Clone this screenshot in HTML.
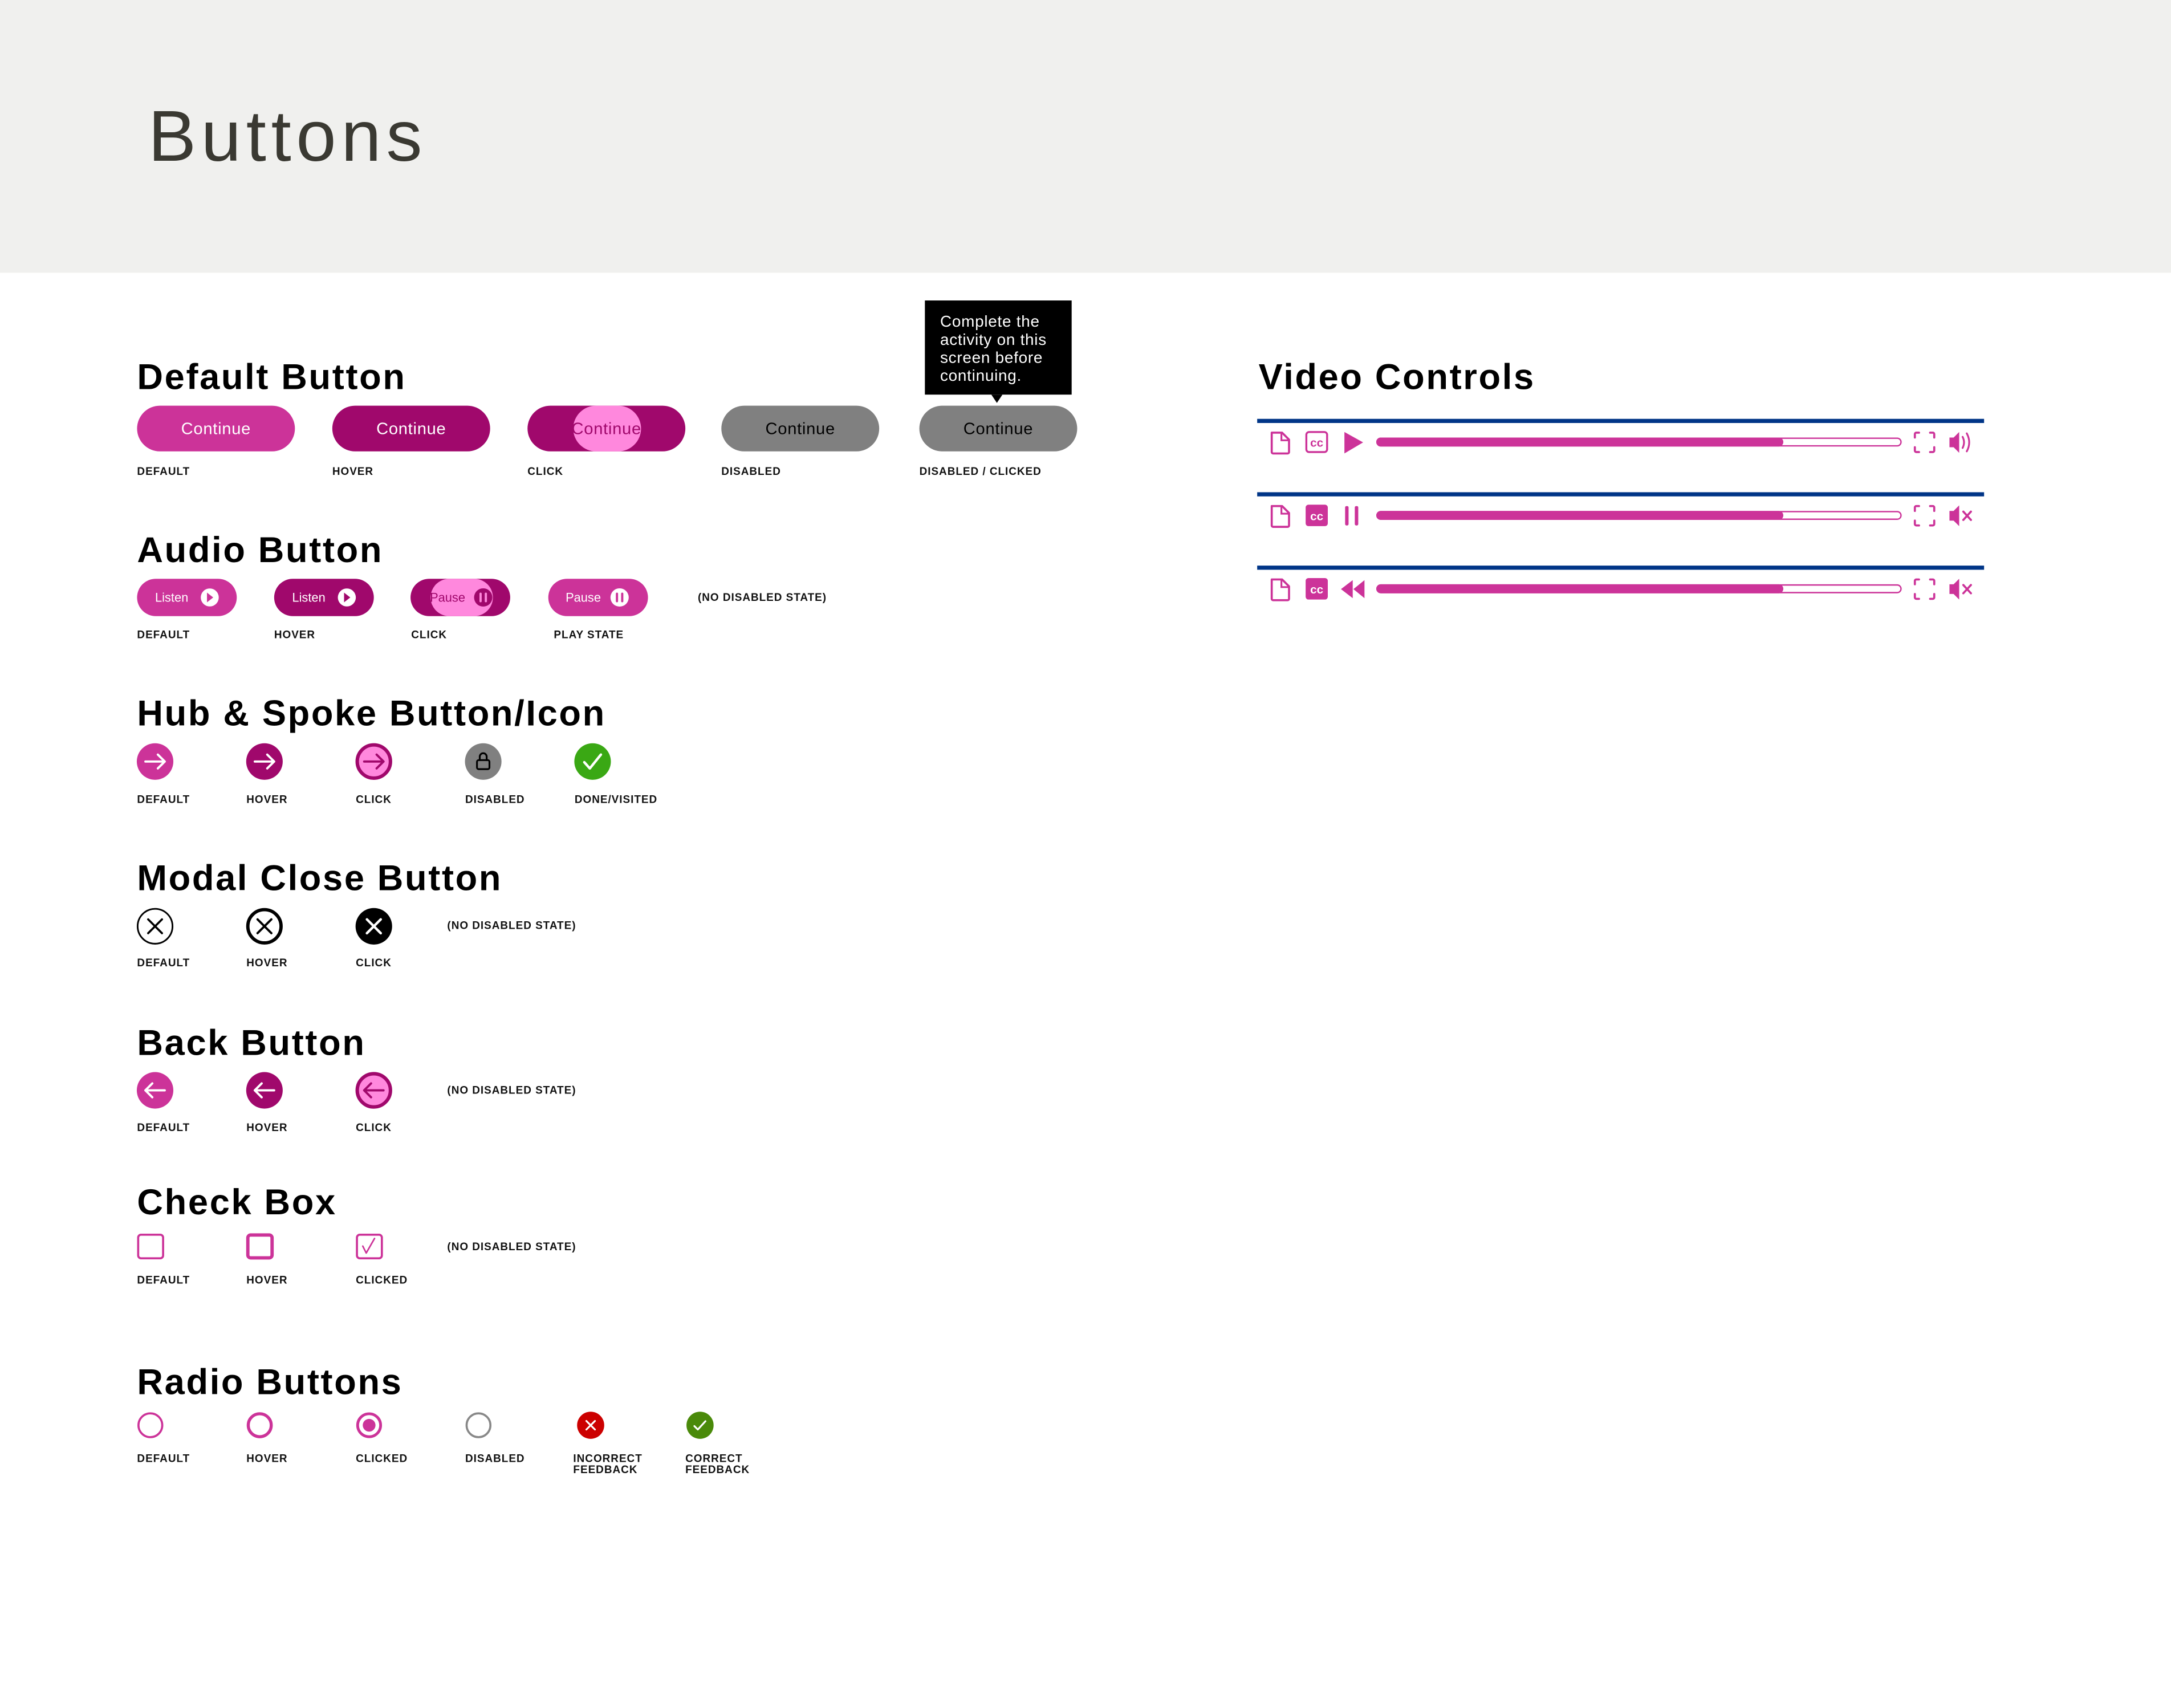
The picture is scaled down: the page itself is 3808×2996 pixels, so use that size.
<!DOCTYPE html>
<html><head><meta charset="utf-8"><style>
html,body{margin:0;padding:0;background:#fff;}
svg{display:block;}
text{font-family:"Liberation Sans",sans-serif;}
.h{font-size:26px;font-weight:bold;fill:#000;letter-spacing:1.1px;}
.l{font-size:7.8px;font-weight:bold;fill:#111;letter-spacing:0.4px;}
.bt{font-size:12px;text-anchor:middle;letter-spacing:0.3px;}
</style></head><body>
<svg width="3808" height="2996" viewBox="0 0 1568 1233.6" xmlns="http://www.w3.org/2000/svg">
<rect x="0" y="0" width="1568" height="1233.6" fill="#fff"/>
<rect x="0" y="0" width="1568" height="197" fill="#f0f0ee"/>
<text x="107" y="116" font-size="52" fill="#3a3932" style="font-weight:normal;letter-spacing:3.6px">Buttons</text>

<!-- Default Button -->
<text class="h" x="99" y="281">Default Button</text>
<rect x="99" y="293" width="114" height="33" rx="16.5" fill="#cc3399"/>
<text class="bt" x="156" y="313.5" fill="#fff">Continue</text>
<rect x="240" y="293" width="114" height="33" rx="16.5" fill="#a0086c"/>
<text class="bt" x="297" y="313.5" fill="#fff">Continue</text>
<rect x="381" y="293" width="114" height="33" rx="16.5" fill="#a0086c"/>
<rect x="414" y="293" width="49" height="33" rx="16.5" fill="#ff88dd"/>
<text class="bt" x="438" y="313.5" fill="#a0086c">Continue</text>
<rect x="521" y="293" width="114" height="33" rx="16.5" fill="#808080"/>
<text class="bt" x="578" y="313.5" fill="#000">Continue</text>
<rect x="664" y="293" width="114" height="33" rx="16.5" fill="#808080"/>
<text class="bt" x="721" y="313.5" fill="#000">Continue</text>
<rect x="668" y="217" width="106" height="68" fill="#000"/>
<polygon points="716,285 724,285 720,291" fill="#000"/>
<g font-size="11.5" fill="#fff" style="letter-spacing:0.3px">
<text x="679" y="236">Complete the</text>
<text x="679" y="249">activity on this</text>
<text x="679" y="262">screen before</text>
<text x="679" y="275">continuing.</text>
</g>
<text class="l" x="99" y="343">DEFAULT</text>
<text class="l" x="240" y="343">HOVER</text>
<text class="l" x="381" y="343">CLICK</text>
<text class="l" x="521" y="343">DISABLED</text>
<text class="l" x="664" y="343">DISABLED / CLICKED</text>

<!-- Audio Button -->
<text class="h" x="99" y="406">Audio Button</text>
<g font-size="9">
<rect x="99" y="418" width="72" height="27" rx="13.5" fill="#cc3399"/>
<text x="112" y="434.5" fill="#fff">Listen</text>
<circle cx="151.5" cy="431.5" r="6.5" fill="#fff"/>
<polygon points="149.5,428 149.5,435 154,431.5" fill="#cc3399"/>
<rect x="198" y="418" width="72" height="27" rx="13.5" fill="#a0086c"/>
<text x="211" y="434.5" fill="#fff">Listen</text>
<circle cx="250.5" cy="431.5" r="6.5" fill="#fff"/>
<polygon points="248.5,428 248.5,435 253,431.5" fill="#a0086c"/>
<rect x="296.5" y="418" width="72" height="27" rx="13.5" fill="#a0086c"/>
<rect x="311" y="418" width="45" height="27" rx="13.5" fill="#ff88dd"/>
<text x="310.5" y="434.5" fill="#a0086c">Pause</text>
<circle cx="349" cy="431.5" r="6.6" fill="#a0086c"/>
<rect x="346.3" y="428" width="1.6" height="7" rx=".8" fill="#ff88dd"/>
<rect x="350.1" y="428" width="1.6" height="7" rx=".8" fill="#ff88dd"/>
<rect x="396" y="418" width="72" height="27" rx="13.5" fill="#cc3399"/>
<text x="408.5" y="434.5" fill="#fff">Pause</text>
<circle cx="447.5" cy="431.5" r="6.6" fill="#fff"/>
<rect x="444.8" y="428" width="1.6" height="7" rx=".8" fill="#cc3399"/>
<rect x="448.6" y="428" width="1.6" height="7" rx=".8" fill="#cc3399"/>
</g>
<text class="l" x="504" y="434">(NO DISABLED STATE)</text>
<text class="l" x="99" y="461">DEFAULT</text>
<text class="l" x="198" y="461">HOVER</text>
<text class="l" x="297" y="461">CLICK</text>
<text class="l" x="400" y="461">PLAY STATE</text>

<!-- Hub & Spoke -->
<text class="h" x="99" y="524">Hub &amp; Spoke Button/Icon</text>
<g stroke-linecap="round" stroke-linejoin="round" fill="none" stroke-width="1.6">
<circle cx="112" cy="550" r="13.2" fill="#cc3399" stroke="none"/>
<path d="M105 550H119M114 545L119 550L114 555" stroke="#fff"/>
<circle cx="191" cy="550" r="13.2" fill="#a0086c" stroke="none"/>
<path d="M184 550H198M193 545L198 550L193 555" stroke="#fff"/>
<circle cx="270" cy="550" r="12" fill="#ff88dd" stroke="#a0086c" stroke-width="2.5"/>
<path d="M263 550H277M272 545L277 550L272 555" stroke="#a0086c"/>
<circle cx="349" cy="550" r="13.2" fill="#808080" stroke="none"/>
<rect x="344.5" y="549" width="9" height="6.5" rx="1.2" stroke="#000" stroke-width="1.3"/>
<path d="M346.5 549V546.5A2.5 2.5 0 0 1 351.5 546.5V549" stroke="#000" stroke-width="1.3"/>
<circle cx="428" cy="550" r="13.2" fill="#3aa814" stroke="none"/>
<path d="M422 550.5L426 555L434 545" stroke="#fff" stroke-width="1.8"/>
</g>
<text class="l" x="99" y="580">DEFAULT</text>
<text class="l" x="178" y="580">HOVER</text>
<text class="l" x="257" y="580">CLICK</text>
<text class="l" x="336" y="580">DISABLED</text>
<text class="l" x="415" y="580">DONE/VISITED</text>

<!-- Modal close -->
<text class="h" x="99" y="643">Modal Close Button</text>
<g stroke-linecap="round" fill="none">
<circle cx="112" cy="669" r="12.6" fill="#fff" stroke="#000" stroke-width="1.2"/>
<path d="M107 664L117 674M117 664L107 674" stroke="#000" stroke-width="1.5"/>
<circle cx="191" cy="669" r="12" fill="#fff" stroke="#000" stroke-width="2.4"/>
<path d="M186 664L196 674M196 664L186 674" stroke="#000" stroke-width="1.6"/>
<circle cx="270" cy="669" r="13.2" fill="#000"/>
<path d="M265 664L275 674M275 664L265 674" stroke="#fff" stroke-width="1.8"/>
</g>
<text class="l" x="323" y="671">(NO DISABLED STATE)</text>
<text class="l" x="99" y="698">DEFAULT</text>
<text class="l" x="178" y="698">HOVER</text>
<text class="l" x="257" y="698">CLICK</text>

<!-- Back -->
<text class="h" x="99" y="762">Back Button</text>
<g stroke-linecap="round" stroke-linejoin="round" fill="none" stroke-width="1.6">
<circle cx="112" cy="787.5" r="13.2" fill="#cc3399" stroke="none"/>
<path d="M119 787.5H105M110 782.5L105 787.5L110 792.5" stroke="#fff"/>
<circle cx="191" cy="787.5" r="13.2" fill="#a0086c" stroke="none"/>
<path d="M198 787.5H184M189 782.5L184 787.5L189 792.5" stroke="#fff"/>
<circle cx="270" cy="787.5" r="12" fill="#ff88dd" stroke="#a0086c" stroke-width="2.5"/>
<path d="M277 787.5H263M268 782.5L263 787.5L268 792.5" stroke="#a0086c"/>
</g>
<text class="l" x="323" y="790">(NO DISABLED STATE)</text>
<text class="l" x="99" y="817">DEFAULT</text>
<text class="l" x="178" y="817">HOVER</text>
<text class="l" x="257" y="817">CLICK</text>

<!-- Check box -->
<text class="h" x="99" y="877">Check Box</text>
<g fill="none" stroke="#cc3399">
<rect x="99.8" y="891.8" width="18" height="17" rx="2" stroke-width="1.5"/>
<rect x="179" y="892" width="17.5" height="16.5" rx="2" stroke-width="2.4"/>
<rect x="257.8" y="891.8" width="18" height="17" rx="2" stroke-width="1.5"/>
<path d="M262 900L264.5 905L270.5 894.5" stroke-width="1.1" stroke-linecap="round" stroke-linejoin="round"/>
</g>
<text class="l" x="323" y="903">(NO DISABLED STATE)</text>
<text class="l" x="99" y="927">DEFAULT</text>
<text class="l" x="178" y="927">HOVER</text>
<text class="l" x="257" y="927">CLICKED</text>

<!-- Radio -->
<text class="h" x="99" y="1007">Radio Buttons</text>
<g fill="none">
<circle cx="108.6" cy="1029.4" r="8.6" stroke="#cc3399" stroke-width="1.5"/>
<circle cx="187.6" cy="1029.4" r="8.3" stroke="#cc3399" stroke-width="2.2"/>
<circle cx="266.6" cy="1029.4" r="8.3" stroke="#cc3399" stroke-width="2"/>
<circle cx="266.6" cy="1029.4" r="4.6" fill="#cc3399"/>
<circle cx="345.6" cy="1029.4" r="8.6" stroke="#888" stroke-width="1.5"/>
<circle cx="426.6" cy="1029.4" r="9.8" fill="#cc0000"/>
<path d="M423.5 1026.3L429.7 1032.5M429.7 1026.3L423.5 1032.5" stroke="#fff" stroke-width="1.3" stroke-linecap="round"/>
<circle cx="505.6" cy="1029.4" r="9.8" fill="#4a8a0a"/>
<path d="M501.5 1030L504 1032.5L509.5 1026.5" stroke="#fff" stroke-width="1.3" stroke-linecap="round" stroke-linejoin="round"/>
</g>
<text class="l" x="99" y="1056">DEFAULT</text>
<text class="l" x="178" y="1056">HOVER</text>
<text class="l" x="257" y="1056">CLICKED</text>
<text class="l" x="336" y="1056">DISABLED</text>
<text class="l" x="414" y="1056">INCORRECT</text>
<text class="l" x="414" y="1064">FEEDBACK</text>
<text class="l" x="495" y="1056">CORRECT</text>
<text class="l" x="495" y="1064">FEEDBACK</text>

<!-- Video Controls -->
<text class="h" x="909" y="281">Video Controls</text>
<defs>
<g id="doc"><path d="M918.5 312.5H926L931 317.5V326.5A1 1 0 0 1 930 327.5H919.5A1 1 0 0 1 918.5 326.5Z" fill="none" stroke="#cc3399" stroke-width="1.5" stroke-linejoin="round"/><path d="M925.5 312.5V318H931" fill="none" stroke="#cc3399" stroke-width="1.3"/></g>
<g id="bar"><rect x="994.5" y="316.5" width="378.5" height="5.5" rx="2.75" fill="#fff" stroke="#cc3399" stroke-width="1"/><rect x="994" y="316" width="294" height="6.5" rx="3.25" fill="#cc3399"/></g>
<g id="fs" fill="none" stroke="#cc3399" stroke-width="1.5" stroke-linecap="round"><path d="M1383 316V313.5A1 1 0 0 1 1384 312.5H1386M1394 312.5H1396A1 1 0 0 1 1397 313.5V316M1397 323V325.5A1 1 0 0 1 1396 326.5H1394M1386 326.5H1384A1 1 0 0 1 1383 325.5V323"/></g>
<g id="spk"><path d="M1408 316H1411L1415 312V327L1411 323H1408Z" fill="#cc3399"/></g>
<g id="mute"><use href="#spk"/><path d="M1418 316.5L1423.5 322.5M1423.5 316.5L1418 322.5" stroke="#cc3399" stroke-width="1.5" stroke-linecap="round"/></g>
</defs>
<!-- row 1 -->
<rect x="908" y="302.5" width="525" height="3" fill="#003587"/>
<use href="#doc"/>
<rect x="943.5" y="312" width="15" height="14.5" rx="2" fill="none" stroke="#cc3399" stroke-width="1.4"/>
<text x="951" y="322.7" font-size="8.5" font-weight="bold" fill="#cc3399" text-anchor="middle">cc</text>
<polygon points="971,312 971,327.5 984.5,319.5" fill="#cc3399"/>
<use href="#bar"/>
<use href="#fs"/>
<use href="#spk"/>
<path d="M1417.5 315.5Q1419.5 319.5 1417.5 323.5M1420.5 313Q1424 319.5 1420.5 326" fill="none" stroke="#cc3399" stroke-width="1.3" stroke-linecap="round"/>
<!-- row 2 -->
<g transform="translate(0,53)">
<rect x="908" y="302.5" width="525" height="3" fill="#003587"/>
<use href="#doc"/>
<rect x="943" y="311.5" width="16" height="15.5" rx="2" fill="#cc3399"/>
<text x="951" y="322.7" font-size="8.5" font-weight="bold" fill="#fff" text-anchor="middle">cc</text>
<rect x="971.5" y="312.5" width="2.5" height="14" rx="1" fill="#cc3399"/>
<rect x="978.5" y="312.5" width="2.5" height="14" rx="1" fill="#cc3399"/>
<use href="#bar"/>
<use href="#fs"/>
<use href="#mute"/>
</g>
<!-- row 3 -->
<g transform="translate(0,106)">
<rect x="908" y="302.5" width="525" height="3" fill="#003587"/>
<use href="#doc"/>
<rect x="943" y="311.5" width="16" height="15.5" rx="2" fill="#cc3399"/>
<text x="951" y="322.7" font-size="8.5" font-weight="bold" fill="#fff" text-anchor="middle">cc</text>
<polygon points="977,313 977,326 968.5,319.5" fill="#cc3399"/>
<polygon points="985.5,313 985.5,326 977.5,319.5" fill="#cc3399"/>
<use href="#bar"/>
<use href="#fs"/>
<use href="#mute"/>
</g>
</svg>
</body></html>
